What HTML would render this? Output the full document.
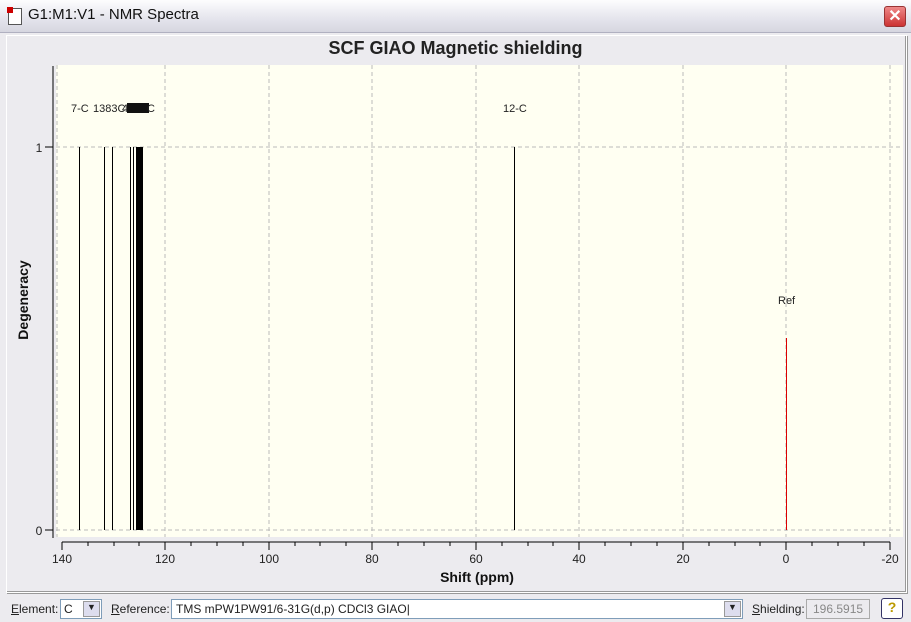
<!DOCTYPE html>
<html><head><style>
body{margin:0;width:911px;height:622px;overflow:hidden;background:#ecebef;font-family:"Liberation Sans",sans-serif;position:relative}
.t{position:absolute}
</style></head><body>
<div class="t" style="left:0;top:0;width:911px;height:32px;background:linear-gradient(#fdfdfe,#e4e4ec 60%,#d6d6e0);border-bottom:1px solid #b0b0c0"></div>
<div class="t" style="left:8px;top:8px;width:12px;height:15px;background:#fff;border:1px solid #555"></div>
<div class="t" style="left:7px;top:7px;width:6px;height:6px;background:#c00"></div>
<div class="t" style="left:28px;top:6px;font-size:15px;color:#111">G1:M1:V1 - NMR Spectra</div>
<div class="t" style="left:884px;top:6px;width:20px;height:19px;background:linear-gradient(#e88,#c33);border:1px solid #933;border-radius:3px;color:#fff;font-size:16px;text-align:center;line-height:19px;font-weight:bold">✕</div>
<div class="t" style="left:6px;top:35px;width:899px;height:556px;border:1px solid #fff;box-shadow:inset -1px -1px 0 #999, 1px 1px 0 #999"></div>
<div class="t" style="left:0;top:38px;width:911px;text-align:center;font-size:18px;font-weight:bold;color:#222">SCF GIAO Magnetic shielding</div>
<svg class="t" style="left:0;top:0" width="911" height="622">
<rect x="56" y="65" width="847" height="472" fill="#fffff2"/>
<g stroke="#bbb" stroke-dasharray="4,3" stroke-width="1">
<line x1="57" y1="65" x2="57" y2="537"/><line x1="165" y1="65" x2="165" y2="537"/><line x1="269" y1="65" x2="269" y2="537"/><line x1="372" y1="65" x2="372" y2="537"/><line x1="476" y1="65" x2="476" y2="537"/><line x1="579" y1="65" x2="579" y2="537"/><line x1="683" y1="65" x2="683" y2="537"/><line x1="786" y1="65" x2="786" y2="537"/><line x1="890" y1="65" x2="890" y2="537"/>
<line x1="56" y1="147" x2="903" y2="147"/><line x1="56" y1="530" x2="903" y2="530"/>
</g>
<g stroke="#000"><line x1="53" y1="66" x2="53" y2="538"/><line x1="45" y1="147" x2="53" y2="147"/><line x1="45" y1="530" x2="53" y2="530"/>
<line x1="62" y1="542" x2="890" y2="542"/>
<line x1="62" y1="542" x2="62" y2="550"/><line x1="165" y1="542" x2="165" y2="550"/><line x1="269" y1="542" x2="269" y2="550"/><line x1="372" y1="542" x2="372" y2="550"/><line x1="476" y1="542" x2="476" y2="550"/><line x1="579" y1="542" x2="579" y2="550"/><line x1="683" y1="542" x2="683" y2="550"/><line x1="786" y1="542" x2="786" y2="550"/><line x1="890" y1="542" x2="890" y2="550"/>
<line x1="88" y1="542" x2="88" y2="546"/><line x1="114" y1="542" x2="114" y2="546"/><line x1="139" y1="542" x2="139" y2="546"/><line x1="191" y1="542" x2="191" y2="546"/><line x1="217" y1="542" x2="217" y2="546"/><line x1="243" y1="542" x2="243" y2="546"/><line x1="295" y1="542" x2="295" y2="546"/><line x1="320" y1="542" x2="320" y2="546"/><line x1="346" y1="542" x2="346" y2="546"/><line x1="398" y1="542" x2="398" y2="546"/><line x1="424" y1="542" x2="424" y2="546"/><line x1="450" y1="542" x2="450" y2="546"/><line x1="502" y1="542" x2="502" y2="546"/><line x1="528" y1="542" x2="528" y2="546"/><line x1="553" y1="542" x2="553" y2="546"/><line x1="605" y1="542" x2="605" y2="546"/><line x1="631" y1="542" x2="631" y2="546"/><line x1="657" y1="542" x2="657" y2="546"/><line x1="709" y1="542" x2="709" y2="546"/><line x1="735" y1="542" x2="735" y2="546"/><line x1="760" y1="542" x2="760" y2="546"/><line x1="812" y1="542" x2="812" y2="546"/><line x1="838" y1="542" x2="838" y2="546"/><line x1="864" y1="542" x2="864" y2="546"/>
<line x1="79.5" y1="147" x2="79.5" y2="530"/><line x1="104.5" y1="147" x2="104.5" y2="530"/><line x1="112.5" y1="147" x2="112.5" y2="530"/><line x1="130.5" y1="147" x2="130.5" y2="530"/><line x1="133.5" y1="147" x2="133.5" y2="530"/><line x1="514.5" y1="147" x2="514.5" y2="530"/>
</g>
<rect x="136" y="147" width="7" height="383" fill="#000"/>
<line x1="786.5" y1="338" x2="786.5" y2="530" stroke="#d00"/>
<g font-family="Liberation Sans" font-size="11" fill="#222">
<text x="71" y="112">7-C</text><text x="93" y="112">1383C</text><text x="122" y="112">4</text>
<rect x="127" y="103" width="22" height="10" fill="#111"/><text x="147" y="112">C</text>
<text x="503" y="112">12-C</text><text x="778" y="304">Ref</text>
</g>
<g font-family="Liberation Sans" font-size="12" fill="#222" text-anchor="middle">
<text x="39" y="152">1</text><text x="39" y="535">0</text>
<text x="62" y="563">140</text><text x="165" y="563">120</text><text x="269" y="563">100</text><text x="372" y="563">80</text><text x="476" y="563">60</text><text x="579" y="563">40</text><text x="683" y="563">20</text><text x="786" y="563">0</text><text x="890" y="563">-20</text>
</g>
<text x="477" y="582" font-family="Liberation Sans" font-size="14" font-weight="bold" text-anchor="middle" fill="#111">Shift (ppm)</text>
<text transform="translate(28,300) rotate(-90)" font-family="Liberation Sans" font-size="14" font-weight="bold" text-anchor="middle" fill="#111">Degeneracy</text>
</svg>
<div class="t" style="left:0;top:595px;width:911px;height:27px;font-size:12px;color:#222">
<span class="t" style="left:11px;top:7px"><u>E</u>lement:</span>
<div class="t" style="left:60px;top:4px;width:40px;height:18px;background:#fff;border:1px solid #7f9db9"><span style="position:absolute;left:3px;top:2px">C</span><div style="position:absolute;right:1px;top:1px;width:15px;height:14px;background:#dde;border:1px solid #999;font-size:9px;text-align:center">▼</div></div>
<span class="t" style="left:111px;top:7px"><u>R</u>eference:</span>
<div class="t" style="left:171px;top:4px;width:570px;height:18px;background:#fff;border:1px solid #7f9db9"><span style="position:absolute;left:4px;top:2px">TMS mPW1PW91/6-31G(d,p) CDCl3 GIAO|</span><div style="position:absolute;right:1px;top:1px;width:15px;height:14px;background:#dde;border:1px solid #999;font-size:9px;text-align:center">▼</div></div>
<span class="t" style="left:752px;top:7px"><u>S</u>hielding:</span>
<div class="t" style="left:806px;top:4px;width:62px;height:18px;background:#ecebef;border:1px solid #aaa;color:#888"><span style="position:absolute;left:6px;top:2px">196.5915</span></div>
<div class="t" style="left:881px;top:3px;width:20px;height:19px;background:#fff;border:1px solid #336;border-radius:3px;text-align:center;font-weight:bold;color:#b90;font-size:14px">?</div>
</div>
</body></html>
